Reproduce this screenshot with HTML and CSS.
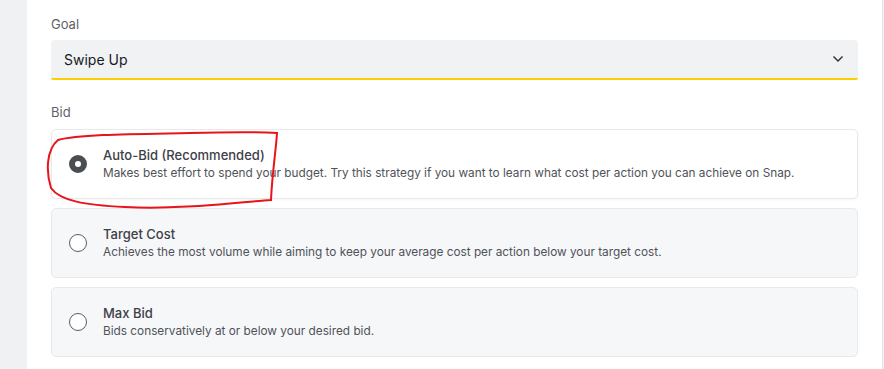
FILE: index.html
```html
<!DOCTYPE html>
<html lang="en">
<head>
    <meta charset="UTF-8">
    <meta name="viewport" content="width=device-width, initial-scale=1.0">
    <title>Bid settings</title>
    <link rel="stylesheet" href="styles.css">
</head>
<body>
    <div class="side"></div>
    <div class="panel">
        <div class="label">Goal</div>
        <div class="select">
            <span>Swipe Up</span>
            <svg class="chev" width="12" height="8" viewBox="0 0 12 8"><path d="M1.5 1.5 L6 6 L10.5 1.5" fill="none" stroke="#33363b" stroke-width="1.5"/></svg>
        </div>

        <div class="label bid">Bid</div>
        <ul class="options">
            <li class="opt on">
                <span class="radio"></span>
                <div class="txt">
                    <h4>Auto-Bid (Recommended)</h4>
                    <p>Makes best effort to spend your budget. Try this strategy if you want to learn what cost per action you can achieve on Snap.</p>
                </div>
            </li>
            <li class="opt">
                <span class="radio"></span>
                <div class="txt">
                    <h4>Target Cost</h4>
                    <p>Achieves the most volume while aiming to keep your average cost per action below your target cost.</p>
                </div>
            </li>
            <li class="opt">
                <span class="radio"></span>
                <div class="txt">
                    <h4>Max Bid</h4>
                    <p>Bids conservatively at or below your desired bid.</p>
                </div>
            </li>
        </ul>
        <!-- hand drawn mark over the first option -->
        <svg class="mark" width="884" height="369" viewBox="0 0 884 369">
            <path d="M58 140 C80 134 140 134 190 133 C230 132 260 132 277 133 C276 150 272 175 271 200 C240 202 180 210 125 207 C85 205 60 201 51 188 C46 172 46 150 58 140 Z" fill="none" stroke="#e8141b" stroke-width="2"/>
        </svg>
    </div>
    <div class="edge"></div>
</body>
</html>
```

FILE: styles.css
```css
body,p,h4,ul{
    margin:0;
}
ul{
    padding-left:0;
    list-style-type:none;
}
body{
    display:flex;
    height:369px;
    background-color:#f0f1f3;
    font-family:Inter,"Liberation Sans",sans-serif;
    overflow:hidden;
}
.side{
    width:27px;
    flex-shrink:0;
}
.panel{
    width:855px;
    flex-shrink:0;
    padding:16px 24px 0;
    box-sizing:border-box;
    background-color:#fff;
}
.edge{
    flex:1;
    border-left:1px solid #e4e5e7;
}
.mark{
    position:absolute;
    left:0;
    top:0;
    pointer-events:none;
}
.label{
    height:16px;
    line-height:16px;
    font-size:13px;
    color:#5f6268;
    margin-bottom:8px;
}
.label.bid{
    margin-top:24px;
    margin-bottom:9px;
}
.select{
    display:flex;
    align-items:center;
    justify-content:space-between;
    height:38px;
    padding:0 14px 0 13px;
    background-color:#f1f2f4;
    border-bottom:2px solid #fccf00;
    border-radius:4px 4px 2px 2px;
    font-size:14px;
    color:#16191f;
}
.options{
    display:flex;
    flex-direction:column;
    gap:9px;
}
.opt{
    display:flex;
    align-items:center;
    height:68px;
    padding-left:17px;
    gap:16px;
    background-color:#f6f7f8;
    border:1px solid #e8e9eb;
    border-radius:5px;
}
.opt.on{
    background-color:#fff;
    box-shadow:0 1px 3px rgba(0,0,0,.04);
}
.radio{
    width:18px;
    height:18px;
    box-sizing:border-box;
    border:1.5px solid #5a5d63;
    border-radius:50%;
    background-color:#fff;
    flex-shrink:0;
}
.opt.on .radio{
    border:6px solid #4a4d52;
}
.txt h4{
    font-size:13px;
    font-weight:500;
    line-height:18px;
    color:#3d4046;
}
.txt p{
    font-size:11.8px;
    line-height:18px;
    color:#4f5258;
}
```
